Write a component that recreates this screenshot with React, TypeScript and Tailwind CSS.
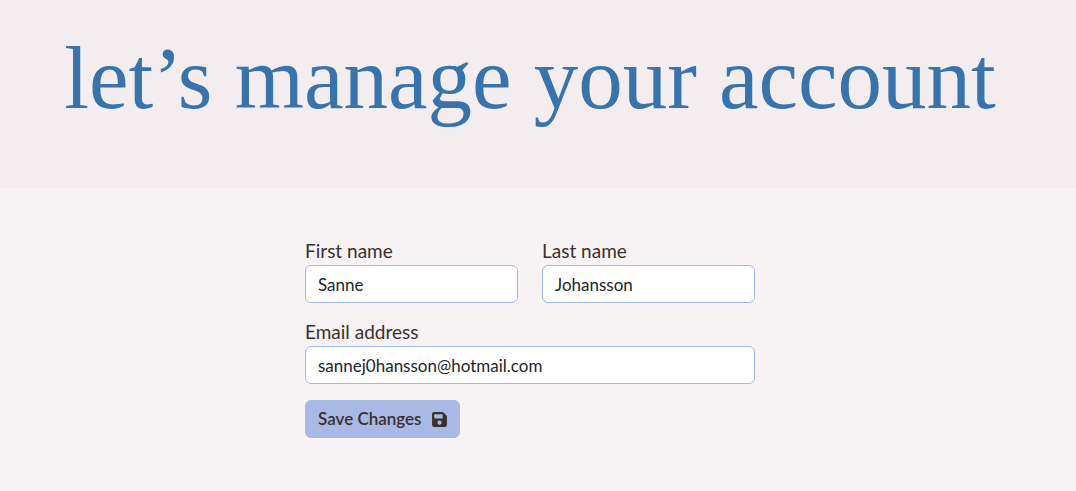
import { FaFloppyDisk } from "react-icons/fa6";

type FieldProps = {
  id: string;
  label: string;
  value: string;
  type?: string;
};

function Field({ id, label, value, type = "text" }: FieldProps) {
  return (
    <div className="flex min-w-0 flex-1 flex-col">
      <label htmlFor={id} className="pb-0.5 text-[19px] leading-[25px] text-[#3a302c]">
        {label}
      </label>
      <input
        id={id}
        type={type}
        defaultValue={value}
        className="h-[38px] w-full rounded-md border border-[#a3b8e8] bg-white px-3 text-[17px] text-[#212529] outline-none focus:ring-2 focus:ring-[#a9b9e6]"
      />
    </div>
  );
}

export default function App() {
  return (
    <div className="min-h-screen bg-[#f7f3f4] font-['Lato','Liberation_Sans',sans-serif]">
      <header className="bg-[#f3edef] pt-[30px] pr-4 pb-[62px]">
        <h1 className="text-center font-['Liberation_Serif',serif] text-[89px] leading-[96px] text-[#3973ac]">
          let’s manage your account
        </h1>
      </header>
      <main className="pt-[50px] pr-4 pb-12">
        <form className="mx-auto flex max-w-[450px] flex-col gap-4" onSubmit={(e) => e.preventDefault()}>
          <div className="flex gap-6">
            <Field id="first-name" label="First name" value="Sanne" />
            <Field id="last-name" label="Last name" value="Johansson" />
          </div>
          <Field id="email" label="Email address" value="sannej0hansson@hotmail.com" type="email" />
          <button
            type="submit"
            className="flex h-[38px] items-center gap-2.5 self-start rounded-md border border-[#a9b9e6] bg-[#a9b9e6] px-3 text-[17px] font-semibold text-[#3a302c]"
          >
            Save Changes
            <FaFloppyDisk className="h-[17px] w-[15px]" aria-hidden="true" />
          </button>
        </form>
      </main>
    </div>
  );
}
